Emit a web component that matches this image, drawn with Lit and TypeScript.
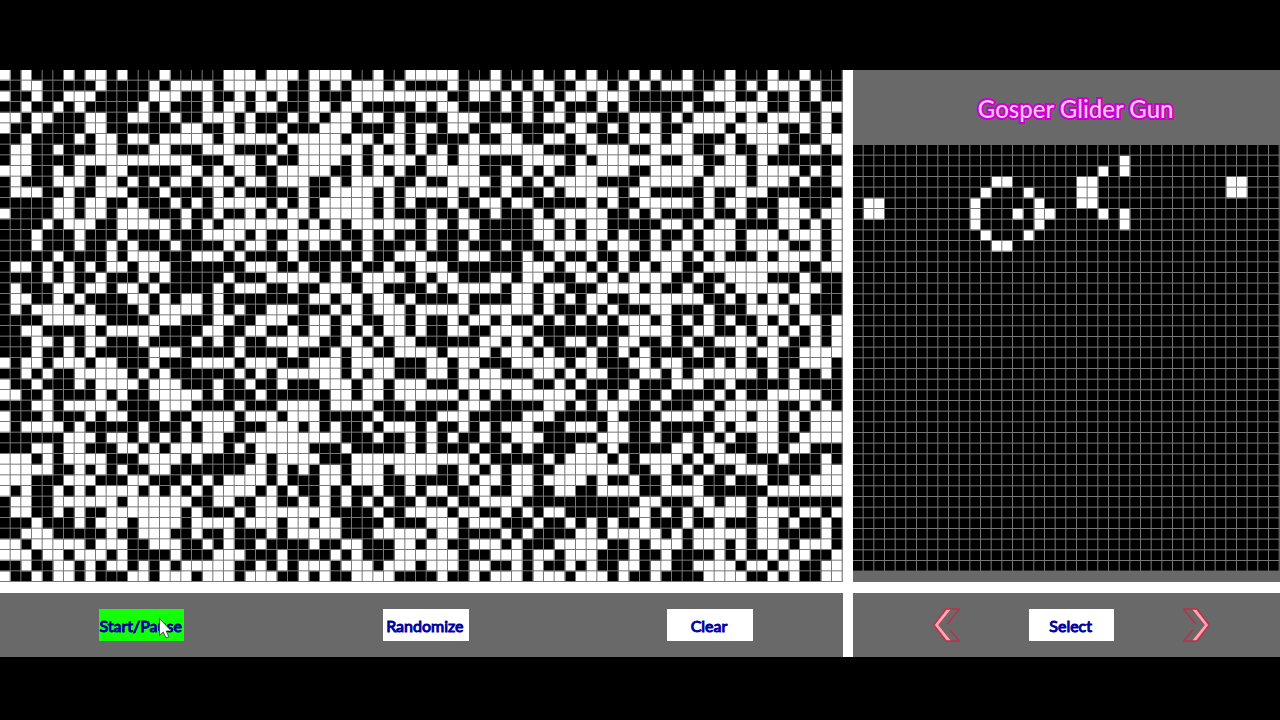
import { LitElement, html, svg, css } from "lit";
import { customElement, property, state } from "lit/decorators.js";

// "#" is a dead cell, "." a living one. Each line holds one row of the board.
const SOUP = `
.#.###.#..#.###.#### #...#...#....##.##.. ...###.###.##.#.###. #.##.###.###.##.###
##..#####.####.#.... #......##.#.#...#.## ##.#...#.#..##...#.# .#...##..#.#...#.##
.##.##...#####...##. ##.#.#.##.###....... ..##..#.#.#.#..#...# ######...##.##.#.##
##.##.#.#####.#.###. #..#..###..#..#####. #..####.#.##.###.#.# ####.###....##.##..
..#..###..##..##.##. ..#.###.#.#..#..#.## ##...####.#..#..###. ..#.#....#.#....#.#
.##.####..#######..# #.#.##.###...####.#. .#..##..#####..##.#. #.##....#....##.#.#
##.####.#..#..#..... #.....#.....#..#..#. ####.##..##..#..###. ..#..###.#....###..
#..##.###..###..###. ..####.#......#.#.#. #.#........####....# #....##..##..##..#.
#..####...........## #...#.##....#.#....# ..#..####....#.#.... ..##..##..#.#######
...##.#.##..#####..# .#..##.....##.#.#.## .....##.#.#.##.....# #.....#...#....#.#.
#.###...#..#.#.#..#. ..#..#...##.#....##. ##....#..#.#....#### .....#....#...#.##.
#...##.##...###.#### .#.#####.##....#.#.. ...#.##.###.#.....#. .#####.##...#######
#####..#..##.###.#.# .....#.#.#.....#.#.# ##.##..#..#####.#.## .....#.#..###..###.
.####..#..#...###.## .##.#.#..#.....#.### .##.##.###.#.....##. #.####.##.#.#...#..
####.#...##.....#.#. #.......#.#.#......# ..#..#####..#.#..### ##..#.#..####..#.#.
###.###.###.###.###. ...#.##.....##.#.### .###.#####..#.#..#.# #.##.#...#...#...#.
###.###.##.#.###.### #.#..#..#.##.#.###.# .##.###.###.....#... #.#..#...#....##.#.
#####.####.#...###.. .#.####.######.##... ###...###.##.##.##.# #...#.#.###.#....#.
#..#.#.#.#..#...#### ###...##.##.#.##.##. ..#######...#..#.#.# .#..##.........##..
####.#.##.###.#.#### #.###.....#.##....#. #..###..#..###..#.#. ...##.##....###.###
#.###..#..#..#.##### .#...##.##...#..#### .#.....#..#..###.... #.##.##.#.....#..##
#..##.#.####..#.#..# .########..#..#..#.# ###.####..#.#.#..##. ......##.#.#.#..###
#.#....#.####.#....# .#.##...###.#.#...#. ....#.....#.###.#.## #..###.###....#.###
####......####...### ..##...##..#..##..#. ##.#..#.##.#.#.#.#.. .#.#.#.#.##.#.#..#.
##..####.#.....####. .##..##.#..#.#.#..#. ##..##....#########. ...##..##.#..#.#.#.
###..#.#..###.####.# .#.##.....##..#.#..# #####..#.#.##..#.#.. ##.#.##....#..##.#.
###.##.#.#####...### ##.####.###.#..##... .#....#...#.###.##.# .####.###.#..##....
.#..#...#..###.###.. ..#...###...#....### ..#..###.....#..###. .#..###.#.##.##...#
##.#.##.....#.#.#### ##.#.#......#.#..### ..#.#..###..#.#..### ..#.#......#.#.##.#
.##.###.#....#...### .##.##.###...#..#... ###.......##.#.####. ###...##.#####.####
..##.####.#.##.....# .###.######..#..#... ...#.#.#......##.#.. ##.####.#.##.....##
###..#.....####...## ##.###....#....###.# ###...#####..#.#...# #.###..#.....##.#.#
.###.###.#..###.##.. ..#...#...#####.#### #...#####...#####.## ##....#...#..#.#...
.#....#.#####.###.#. ..###...#.#.##.#...# .##.#.#...###...#..# #.#####.#....#.#...
######...#..#.#.#.#. .##.........###.##.# .#.##.##...#####...# #.##.#.#.##..##....
###..#..###..#.#.... .#.#.....###.#####.# .###.##.#.####..#.## ###..#..###..#..###
...#.#....###....#.# ####.#....###....... ....#.#####.#....#.# ....#.#...###.###.#
.....##.#.#.##..#### ###..#.#.#..#...#... .##..#.#..##.......# #..#.#.##...#####..
...###...###..###.#. #....#.###..#...##.# ###.#..#..#....#.##. ##.##.##.##.##.#...
.#.##.#.#....#.#.#.# ....#.#.##.#.##.##.# ..##..##..##..##.... ##....######.......
#..##......#......## ..##..##.#.#.#.#.##. ##.##....########### ..###..#..#.#######
#..##.#.##.......#.# ##.#.......####.##.. ..#..##.#.#..######. .#.#.#....#...#..#.
###.###.#...#....#.. ..#...#..#..####.### ...#...###.##.#.#.## .###.##.###..#.##.#
##...#####.##...##.# #.###.#.....###..... #..####.#.####..#... ..#.#.....#..####.#
..#.....#...##...##. #.##.####.##..###..# ..##...#.###.....##. #...#...#.#...#...#
...#..#...#.####.### ...###.####.#.###... ...###...#..#...###. ##.####.#.##.#..##.
##.##..#.#..#.#.#... ..##.#.#...#...#...# ...#..##.#.##.#.##.. #..##....#..#..##..
.##.#..#.###..#...#. ..#...##.#.##....### #.##.#...#...#...#.# #.####....##.#.##..
`;

type Cell = [number, number];

const soupCells = (): Cell[] =>
  SOUP.trim()
    .split("\n")
    .flatMap((line, y) =>
      [...line.replace(/ /g, "")].flatMap((c, x) => (c === "." ? [[x, y] as Cell] : []))
    );

const GLIDER_GUN: Cell[] = [
  [1, 5], [2, 5], [1, 6], [2, 6],
  [11, 5], [11, 6], [11, 7], [12, 4], [12, 8], [13, 3], [14, 3], [13, 9], [14, 9],
  [15, 6], [16, 4], [16, 8], [17, 5], [17, 6], [17, 7], [18, 6],
  [21, 3], [22, 3], [21, 4], [22, 4], [21, 5], [22, 5],
  [23, 2], [23, 6], [25, 1], [25, 2], [25, 6], [25, 7],
  [35, 3], [36, 3], [35, 4], [36, 4],
];

@customElement("life-board")
export class LifeBoard extends LitElement {
  @property({ type: Number }) cols = 40;
  @property({ type: Number }) rows = 40;
  @property({ attribute: false }) cells: Cell[] = [];
  @property() label = "";

  static styles = css`
    :host {
      display: block;
    }
    .board {
      display: block;
      width: 100%;
      height: auto;
    }
    .dead {
      fill: #000;
    }
    .alive {
      fill: #fff;
    }
    .rule {
      fill: none;
      stroke: #787878;
      stroke-width: 1px;
      vector-effect: non-scaling-stroke;
    }
  `;

  render() {
    const alive = this.cells.map(([x, y]) => `M${x} ${y}h1v1h-1z`).join("");
    const inset = 0.047;
    let rules = "";
    for (let x = 1; x <= this.cols; x++) rules += `M${x - inset} 0V${this.rows}`;
    for (let y = 1; y <= this.rows; y++) rules += `M0 ${y - inset}H${this.cols}`;
    return html`<svg class="board" viewBox="0 0 ${this.cols} ${this.rows}" role="img" aria-label=${this.label}>
      ${svg`<rect class="dead" width=${this.cols} height=${this.rows}></rect>
      <path class="alive" d=${alive}></path>
      <path class="rule" d=${rules}></path>`}
    </svg>`;
  }
}

@customElement("app-root")
export class AppRoot extends LitElement {
  @state() private cells: Cell[] = soupCells();

  static styles = css`
    :host {
      --cell: calc(100vw / 120);
      display: block;
      box-sizing: border-box;
      min-height: 100vh;
      padding-top: 70px;
      background: #000;
      font-family: Lato, "Open Sans", sans-serif;
    }
    .stage {
      display: grid;
      grid-template-columns: 79fr 40fr;
      gap: var(--cell);
      background: #fff;
    }
    .side {
      display: flex;
      flex-direction: column;
      background: #696969;
    }
    .title {
      display: flex;
      align-items: center;
      justify-content: center;
      height: calc(var(--cell) * 7);
      margin: 0;
      padding: 4px 0 0 18px;
      box-sizing: border-box;
      font-size: 24px;
      line-height: 32px;
      font-weight: 500;
      color: #ffc4ff;
      -webkit-text-stroke: 4px #cc00cc;
      paint-order: stroke fill;
      text-shadow: 0 0 2px #cc00cc;
    }
    .bar {
      display: flex;
      align-items: center;
      justify-content: space-between;
      height: calc(var(--cell) * 6);
      box-sizing: border-box;
      background: #696969;
    }
    .controls {
      padding: 0 90px 0 99px;
    }
    .picker {
      padding: 0 70px 0 80px;
    }
    .button {
      position: relative;
      display: flex;
      align-items: center;
      justify-content: center;
      width: calc(var(--cell) * 8);
      height: calc(var(--cell) * 3);
      padding: 3px 2px 0 0;
      border: 0;
      background: #fff;
      color: #0000a0;
      font-family: inherit;
      font-size: 16px;
      line-height: 20px;
      font-weight: 400;
      -webkit-text-stroke: 1px #0000a0;
      white-space: nowrap;
    }
    .active {
      background: #14ff0a;
    }
    .arrow {
      display: block;
      padding: 0;
      border: 0;
      background: none;
    }
    .chevron {
      display: block;
      width: 27px;
      height: 34px;
    }
    .pointer {
      position: absolute;
      left: 60px;
      top: 9px;
      width: 13px;
      height: 21px;
      pointer-events: none;
    }
  `;

  private randomize() {
    this.cells = Array.from({ length: 79 * 48 }, (_, i) => [i % 79, Math.floor(i / 79)] as Cell).filter(
      () => Math.random() < 0.5
    );
  }

  private clear() {
    this.cells = [];
  }

  private chevron(flip: boolean) {
    return html`<svg class="chevron" viewBox="0 0 27 34" aria-hidden="true">
      ${svg`<g transform=${flip ? "translate(27 0) scale(-1 1)" : ""} fill="none">
        <path d="M26.500 1H13L0.700 17L13 33H26.500L17 22M26.500 1L14.500 16" stroke="#bb3048" stroke-width="1.4"></path>
        <path d="M13.500 1.500H18L5.500 17L18 32.500H13.500L1.500 17Z" fill="#ffa6b4" stroke="#bb3048" stroke-width="0.6"></path>
      </g>`}
    </svg>`;
  }

  render() {
    return html`
      <main class="stage">
        <life-board .cols=${79} .rows=${48} .cells=${this.cells} label="Game of Life"></life-board>
        <section class="side">
          <h1 class="title">Gosper Glider Gun</h1>
          <life-board .cols=${40} .rows=${40} .cells=${GLIDER_GUN} label="Gosper Glider Gun pattern"></life-board>
        </section>
        <div class="bar controls">
          <button class="button active" type="button">
            Start/Pause
            <svg class="pointer" viewBox="0 0 13 21" aria-hidden="true">
              <path
                d="M0.500 0.500V17.500L4.300 14L7 20L9.800 18.800L7.200 13H12.300Z"
                fill="#fff"
                stroke="#333"
                stroke-width="0.8"
              ></path>
            </svg>
          </button>
          <button class="button" type="button" @click=${this.randomize}>Randomize</button>
          <button class="button" type="button" @click=${this.clear}>Clear</button>
        </div>
        <div class="bar picker">
          <button class="arrow" type="button" aria-label="Previous pattern">${this.chevron(false)}</button>
          <button class="button" type="button">Select</button>
          <button class="arrow" type="button" aria-label="Next pattern">${this.chevron(true)}</button>
        </div>
      </main>
    `;
  }
}
